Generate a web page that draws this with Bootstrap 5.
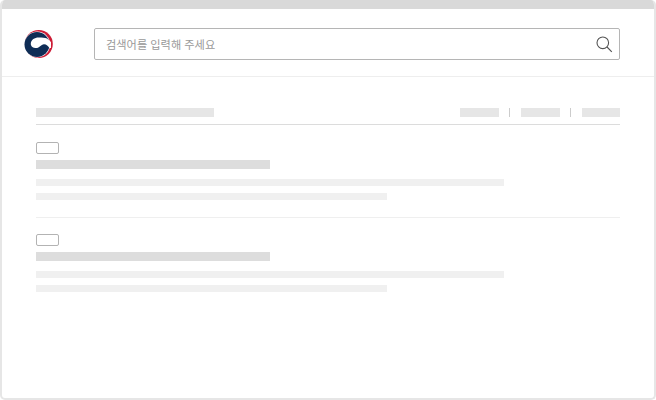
<!DOCTYPE html>
<html lang="ko">
<head>
  <meta charset="UTF-8">
  <meta name="viewport" content="width=device-width, initial-scale=1.0">
  <link href="https://cdn.jsdelivr.net/npm/bootstrap@5.3.2/dist/css/bootstrap.min.css" rel="stylesheet">
  <title>검색</title>
  <style>
    html, body { background: #fff; height: 100%; overflow: hidden; }
    .browser-frame {
      width: 656px; height: 400px;
      border: 2px solid #e6e6e6; border-top: 0; border-radius: 5px;
      overflow: hidden;
    }
    .frame-top { height: 9px; background: #d9d9d9; }
    .site-head { height: 68px; border-bottom: 1px solid #eeeeee; padding: 19px 34px 0 22px; }
    .site-logo { width: 30px; height: 30px; margin-top: 1px; margin-right: 40px; flex: none; }
    .search-box {
      height: 32px; border: 1px solid #b5b5b5; border-radius: 2px;
      padding: 0 6px 0 11px;
    }
    .search-hint { font: 11.2px "Noto Sans CJK KR", "Noto Sans", sans-serif; color: #999999; }
    .main-area { padding: 31px 34px 0; }
    .ph { height: 9px; }
    .ph-head { background: #e6e6e6; }
    .ph-title { background: #dddddd; width: 234px; }
    .ph-line { background: #f0f0f0; height: 7px; }
    .head-row { padding-bottom: 7px; border-bottom: 1px solid #dcdcdc; }
    .head-title { width: 178px; }
    .head-link { width: 39px; }
    .head-link-last { width: 38px; }
    .head-sep { width: 1px; height: 9px; background: #cccccc; margin: 0 11px 0 10px; }
    .tag-box { width: 23px; height: 12px; border: 1px solid #b3b3b3; border-radius: 2px; margin-bottom: 6px; }
    .result-item { padding-top: 16px; }
    .first-item { padding-top: 17px; padding-bottom: 17px; border-bottom: 1px solid #efefef; }
    .line-long { width: 468px; margin-top: 10px; }
    .line-short { width: 351px; margin-top: 7px; }
  </style>
</head>
<body class="m-0">
  <div class="browser-frame">
    <div class="frame-top"></div>
    <div class="site-head d-flex align-items-start">
      <svg class="site-logo" viewBox="0 0 30 30">
        <circle cx="14.800" cy="15" r="14" fill="#cd1c36"/>
        <circle cx="13.300" cy="15.500" r="12.900" fill="#fff"/>
        <circle cx="13" cy="15.500" r="12.500" fill="#0f2d56"/>
        <path d="M6.800 14.500C7 10.500 11 8.300 15 8.500C18 8.700 21 8.500 23 9.500L27 13L27 19L25.400 19C24.500 17 22 15 19.800 15.200C17.500 15.500 16.800 17 14.800 18.200C12.500 19.500 9.800 19.200 8.300 18C7.200 17 6.700 15.700 6.800 14.500Z" fill="#fff"/>
      </svg>
      <div class="search-box flex-grow-1 d-flex align-items-center justify-content-between">
        <span class="search-hint">검색어를 입력해 주세요</span>
        <svg width="18" height="18" viewBox="0 0 18 18" fill="none" stroke="#555" stroke-width="1.100">
          <circle cx="7.800" cy="7.800" r="5.800"/>
          <path d="M12 12l4.800 4.800"/>
        </svg>
      </div>
    </div>
    <div class="main-area">
      <div class="head-row d-flex justify-content-between">
        <div class="ph ph-head head-title"></div>
        <div class="d-flex">
          <div class="ph ph-head head-link"></div>
          <div class="head-sep"></div>
          <div class="ph ph-head head-link"></div>
          <div class="head-sep"></div>
          <div class="ph ph-head head-link-last"></div>
        </div>
      </div>
      <div class="result-item first-item">
        <div class="tag-box"></div>
        <div class="ph ph-title"></div>
        <div class="ph-line line-long"></div>
        <div class="ph-line line-short"></div>
      </div>
      <div class="result-item">
        <div class="tag-box"></div>
        <div class="ph ph-title"></div>
        <div class="ph-line line-long"></div>
        <div class="ph-line line-short"></div>
      </div>
    </div>
  </div>
  <script src="https://cdn.jsdelivr.net/npm/bootstrap@5.3.2/dist/js/bootstrap.bundle.min.js"></script>
</body>
</html>
